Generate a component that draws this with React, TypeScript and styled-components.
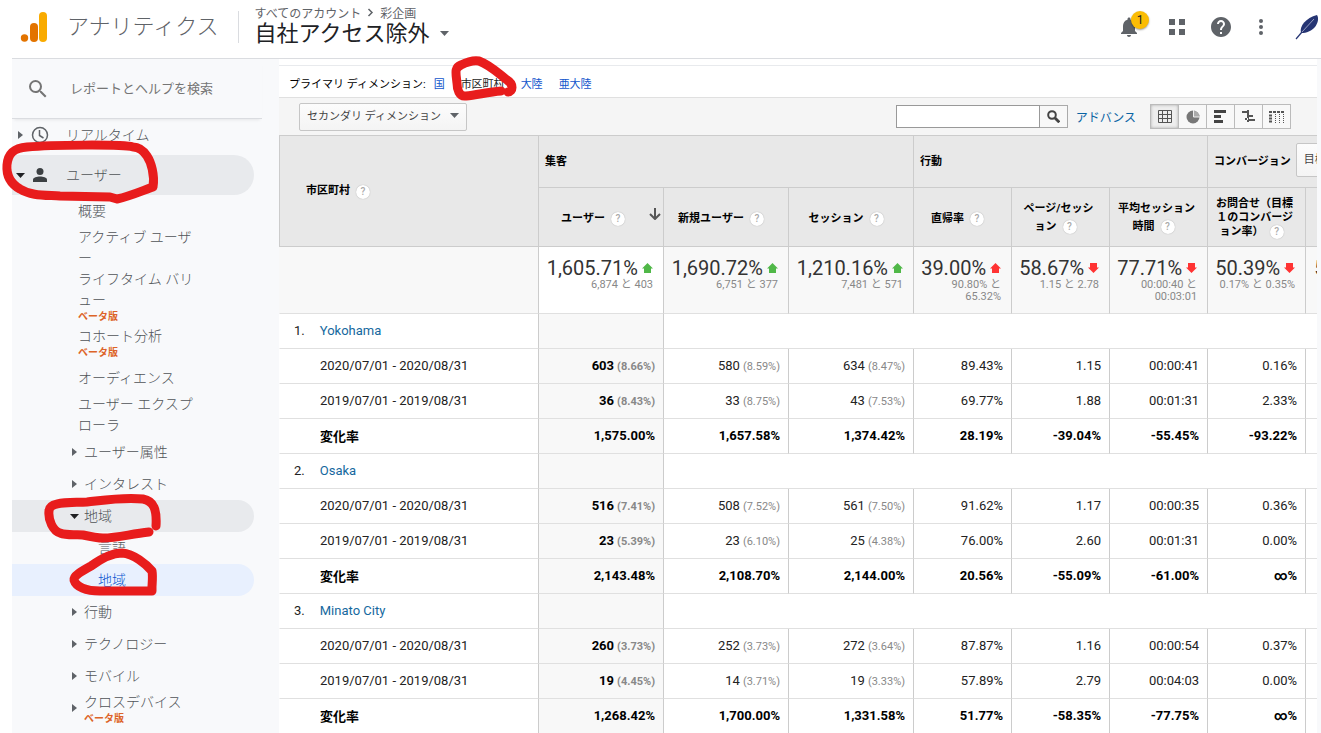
import React from "react";
import styled, { createGlobalStyle, css } from "styled-components";

const jp = `Roboto, "Noto Sans CJK JP", sans-serif`;

const GlobalStyle = createGlobalStyle`
  * { box-sizing: border-box; }
  body { margin: 0; background: #fff; font-family: ${jp}; color: #000; }
  button, input { font-family: inherit; }
  a { text-decoration: none; }
`;

const Page = styled.div`
  position: relative;
  display: flex;
  flex-direction: column;
  height: 100vh;
  overflow: hidden;
`;

/* ---------- Header ---------- */

const Header = styled.header`
  display: flex;
  align-items: center;
  flex: none;
  height: 59px;
  margin-left: 12px;
  padding: 0 0 5px 8px;
  border-bottom: 1px solid #dadce0;
`;

const Brand = styled.a`
  display: flex;
  align-items: center;
  gap: 19px;
  color: #5f6368;
  font-size: 22px;
  font-weight: 300;
  line-height: 28px;
  white-space: nowrap;
`;

const HeaderRule = styled.div`
  width: 1px;
  height: 32px;
  margin: 0 16px 0 19px;
  background: #dadce0;
`;

const Account = styled.div`
  display: flex;
  flex-direction: column;
  flex: 1;
  padding-bottom: 4px;
`;

const Crumbs = styled.nav`
  display: flex;
  align-items: center;
  gap: 6px;
  height: 18px;
  color: #5f6368;
  font-size: 12px;
  a { color: inherit; }
`;

const AccountButton = styled.button`
  display: flex;
  align-items: center;
  gap: 10px;
  height: 24px;
  padding: 0;
  border: 0;
  background: none;
  color: #202124;
  font-size: 22px;
  line-height: 24px;
`;

const Tools = styled.div`
  display: flex;
  align-items: center;
`;

const ToolButton = styled.button<{ $w: number }>`
  position: relative;
  display: flex;
  align-items: center;
  justify-content: center;
  width: ${(p) => p.$w}px;
  height: 40px;
  padding: 0;
  border: 0;
  background: none;
  color: #5f6368;
`;

const Badge = styled.span`
  position: absolute;
  top: 4px;
  right: 2px;
  width: 18px;
  height: 18px;
  border-radius: 50%;
  background: #fbbc04;
  box-shadow: 0 1px 2px rgba(0, 0, 0, 0.4);
  color: #202124;
  font-size: 12px;
  line-height: 18px;
`;

/* ---------- Sidebar ---------- */

const Main = styled.div`
  display: flex;
  flex: 1;
  min-height: 0;
  margin-left: 12px;
`;

const Sidebar = styled.aside`
  flex: none;
  width: 267px;
  overflow: hidden;
  background: #f8f9fb;
`;

const SearchBox = styled.label`
  display: flex;
  align-items: center;
  gap: 23px;
  width: 250px;
  height: 60px;
  padding-left: 17px;
  border-bottom: 1px solid #dadce0;
  box-shadow: 0 3px 3px -2px rgba(0, 0, 0, 0.08);
`;

const SearchInput = styled.input`
  flex: 1;
  min-width: 0;
  padding: 0;
  border: 0;
  outline: 0;
  background: none;
  font-size: 13px;
  &::placeholder { color: #757575; opacity: 1; }
`;

const Nav = styled.nav`
  display: flex;
  flex-direction: column;
`;

type Tone = "grey" | "blue";

const tones = { grey: "#e8eaed", blue: "#e8f0fe" };

const NavItem = styled.a<{ $h: number; $indent: number; $tone?: Tone }>`
  display: flex;
  align-items: center;
  width: 242px;
  height: ${(p) => p.$h}px;
  padding-left: ${(p) => p.$indent}px;
  border-radius: 0 20px 20px 0;
  background: ${(p) => (p.$tone ? tones[p.$tone] : "transparent")};
  color: ${(p) => (p.$tone === "blue" ? "#0b57d0" : "#505458")};
  font-size: 14px;
  font-weight: 300;
  line-height: 21px;
`;

const SectionItem = styled(NavItem)`
  & + & { margin-top: 4px; }
`;

const NavText = styled.span`
  display: block;
  max-width: 120px;
`;

const Beta = styled.span`
  display: block;
  color: #dd6428;
  font-size: 10px;
  font-weight: 700;
  line-height: 11px;
`;

const Marker = styled.span<{ $closed?: boolean }>`
  display: flex;
  align-items: center;
  width: 14px;
  padding-left: ${(p) => (p.$closed ? 2 : 0)}px;
`;

const SectionIcon = styled.span`
  display: flex;
  justify-content: center;
  width: 20px;
  margin-right: 16px;
`;

/* ---------- Report ---------- */

const Report = styled.main`
  flex: 1;
  min-width: 0;
  margin-right: 4px;
  overflow: hidden;
  box-shadow: 4px 0 0 #f8f9fb;
`;

const Dimensions = styled.div`
  display: flex;
  align-items: center;
  height: 33px;
  margin-top: 6px;
  padding: 2px 0 0 10px;
  border-top: 1px solid #e8eaed;
  border-bottom: 1px solid #e0e0e0;
  font-size: 11px;
  white-space: nowrap;
`;

const DimLink = styled.a<{ $current?: boolean }>`
  margin-left: 8px;
  color: ${(p) => (p.$current ? "#222" : "#15c")};
  & + & { margin-left: 16px; }
`;

const Toolbar = styled.div`
  display: flex;
  align-items: center;
  justify-content: space-between;
  height: 37px;
  padding: 0 27px 0 20px;
  background: #f5f5f5;
`;

const GreyButton = styled.button<{ $tall?: boolean }>`
  display: flex;
  align-items: center;
  gap: 9px;
  height: ${(p) => (p.$tall ? 34 : 28)}px;
  padding: 0 7px 3px;
  border: 1px solid #c6c6c6;
  border-radius: 2px;
  background: linear-gradient(#fcfcfc, #f4f4f4);
  color: #444;
  font-size: 11px;
  white-space: nowrap;
`;

const ToolbarRight = styled.div`
  display: flex;
  align-items: center;
`;

const FilterInput = styled.input`
  width: 144px;
  height: 23px;
  border: 1px solid #999;
  border-radius: 0;
  background: #fff;
`;

const FilterButton = styled.button`
  display: flex;
  align-items: center;
  justify-content: center;
  width: 28px;
  height: 23px;
  padding: 0;
  border: 1px solid #aaa;
  border-left: 0;
  background: #f8f8f8;
`;

const Advanced = styled.a`
  margin: 0 14px 0 8px;
  color: #0a64a4;
  font-size: 12px;
`;

const ViewButton = styled.button<{ $on?: boolean }>`
  display: flex;
  align-items: center;
  justify-content: center;
  width: 29px;
  height: 25px;
  margin-right: -1px;
  padding: 0;
  border: 1px solid #bbb;
  background: ${(p) => (p.$on ? "#eee" : "#f8f8f8")};
  box-shadow: ${(p) => (p.$on ? "inset 0 0 3px #aaa" : "none")};
`;

const Table = styled.table`
  width: 1125px;
  border-collapse: separate;
  border-spacing: 0;
  table-layout: fixed;
  font-size: 13px;
`;

const headCell = css`
  border-left: 1px solid #ccc;
  border-bottom: 1px solid #ccc;
  background: #e8e8e8;
  font-size: 11px;
  font-weight: 700;
`;

const GroupHead = styled.th`
  ${headCell}
  height: 53px;
  padding: 0 6px 4px;
  border-top: 1px solid #ccc;
  text-align: left;
  white-space: nowrap;
`;

const GroupInner = styled.div`
  display: flex;
  align-items: center;
  gap: 5px;
`;

const DimHead = styled.th`
  ${headCell}
  padding: 0 26px 2px;
  border-top: 1px solid #ccc;
  text-align: left;
`;

const ColHead = styled.th`
  ${headCell}
  height: 59px;
  padding: 2px 10px 0 6px;
  white-space: nowrap;
`;

const HeadInner = styled.div<{ $count: number; $sorted?: boolean }>`
  position: relative;
  padding-top: ${(p) => (p.$count === 1 ? 2 : 0)}px;
  padding-right: ${(p) => (p.$sorted ? 6 : 0)}px;
  line-height: ${(p) => (p.$count > 2 ? 14 : 18)}px;
`;

const SortArrow = styled.span`
  position: absolute;
  right: -8px;
  top: 0;
`;

const HelpDot = styled.span`
  display: inline-block;
  width: 14px;
  height: 14px;
  margin: 0 6px;
  border-radius: 50%;
  background: #fff;
  box-shadow: 0 0 1px #999;
  color: #aaa;
  font-size: 10px;
  font-weight: 500;
  line-height: 14px;
  text-align: center;
  vertical-align: middle;
`;

const SumCell = styled.td<{ $sorted?: boolean; $edge?: boolean }>`
  height: 67px;
  padding: 10px 10px 0 0;
  border-left: 1px solid ${(p) => (p.$edge ? "#ccc" : "transparent")};
  border-bottom: 1px solid #e0e0e0;
  background: ${(p) => (p.$sorted ? "#fff" : "#f8f8f8")};
  color: #888;
  font-size: 11px;
  line-height: 12px;
  text-align: right;
  vertical-align: top;
`;

const SumValue = styled.div`
  display: flex;
  align-items: center;
  justify-content: flex-end;
  gap: 4px;
  height: 22px;
  color: #333;
  font-size: 20px;
  white-space: nowrap;
`;

const Cell = styled.td<{ $sorted?: boolean; $edge?: boolean; $bold?: boolean }>`
  height: 35px;
  padding: 0 8px 2px 0;
  border-left: 1px solid ${(p) => (p.$edge ? "#ccc" : "transparent")};
  border-bottom: 1px solid #e0e0e0;
  background: ${(p) => (p.$sorted ? "#f8f8f8" : "#fff")};
  color: ${(p) => (p.$bold ? "#000" : "#222")};
  font-weight: ${(p) => (p.$bold ? 700 : 400)};
  text-align: right;
  white-space: nowrap;
`;

const LabelCell = styled(Cell)`
  padding-left: 40px;
  text-align: left;
`;

const PlaceCell = styled(Cell)`
  padding-left: 14px;
  text-align: left;
  a { margin-left: 15px; color: #15689e; }
`;

const Share = styled.small`
  margin-left: 3px;
  color: #888;
  font-size: 11px;
`;

/* ---------- Hand-drawn marks over the page ---------- */

const Ink = styled.svg`
  position: absolute;
  top: 0;
  left: 0;
  width: 620px;
  height: 620px;
  pointer-events: none;
`;

const Caret = ({ right, dark }: { right?: boolean; dark?: boolean }) =>
  right ? (
    <svg width="5" height="8"><path d="M0 0l5 4-5 4z" fill="#5f6368" /></svg>
  ) : (
    <svg width="9" height="5"><path d="M0 0h9L4.500 5z" fill={dark ? "#202124" : "#5f6368"} /></svg>
  );

const Trend = ({ up, color }: { up: boolean; color: string }) => (
  <svg width="11" height="10" viewBox="0 0 11 10">
    <path d={up ? "M5.500 0L11 5.500H9V10H2V5.500H0z" : "M5.500 10L0 4.500h2V0h7v4.500h2z"} fill={color} />
  </svg>
);

const Lens = () => (
  <svg width="18" height="18" viewBox="3 3 18 18" fill="#757575">
    <path d="M15.500 14h-.79l-.28-.27A6.470 6.470 0 0 0 16 9.500 6.500 6.500 0 1 0 9.500 16c1.610 0 3.090-.59 4.230-1.570l.27.28v.79l5 4.990L20.490 19l-4.990-5zm-6 0C7.010 14 5 11.990 5 9.500S7.010 5 9.500 5 14 7.010 14 9.500 11.990 14 9.500 14z" />
  </svg>
);

const green = "#50b848";
const red = "#ff3333";

const summary = [
  { value: "1,605.71%", note: "6,874 と 403", up: true, color: green },
  { value: "1,690.72%", note: "6,751 と 377", up: true, color: green },
  { value: "1,210.16%", note: "7,481 と 571", up: true, color: green },
  { value: "39.00%", note: "90.80% と 65.32%", up: true, color: red },
  { value: "58.67%", note: "1.15 と 2.78", up: false, color: red },
  { value: "77.71%", note: "00:00:40 と 00:03:01", up: false, color: red },
  { value: "50.39%", note: "0.17% と 0.35%", up: false, color: red },
];

const periodA = "2020/07/01 - 2020/08/31";
const periodB = "2019/07/01 - 2019/08/31";

const places = [
  {
    name: "Yokohama",
    rows: [
      [periodA, "603|(8.66%)", "580|(8.59%)", "634|(8.47%)", "89.43%", "1.15", "00:00:41", "0.16%"],
      [periodB, "36|(8.43%)", "33|(8.75%)", "43|(7.53%)", "69.77%", "1.88", "00:01:31", "2.33%"],
      ["変化率", "1,575.00%", "1,657.58%", "1,374.42%", "28.19%", "-39.04%", "-55.45%", "-93.22%"],
    ],
  },
  {
    name: "Osaka",
    rows: [
      [periodA, "516|(7.41%)", "508|(7.52%)", "561|(7.50%)", "91.62%", "1.17", "00:00:35", "0.36%"],
      [periodB, "23|(5.39%)", "23|(6.10%)", "25|(4.38%)", "76.00%", "2.60", "00:01:31", "0.00%"],
      ["変化率", "2,143.48%", "2,108.70%", "2,144.00%", "20.56%", "-55.09%", "-61.00%", "∞%"],
    ],
  },
  {
    name: "Minato City",
    rows: [
      [periodA, "260|(3.73%)", "252|(3.73%)", "272|(3.64%)", "87.87%", "1.16", "00:00:54", "0.37%"],
      [periodB, "19|(4.45%)", "14|(3.71%)", "19|(3.33%)", "57.89%", "2.79", "00:04:03", "0.00%"],
      ["変化率", "1,268.42%", "1,700.00%", "1,331.58%", "51.77%", "-58.35%", "-77.75%", "∞%"],
    ],
  },
];

const columns: { lines: string[]; sorted?: boolean }[] = [
  { lines: ["ユーザー"], sorted: true },
  { lines: ["新規ユーザー"] },
  { lines: ["セッション"] },
  { lines: ["直帰率"] },
  { lines: ["ページ/セッシ", "ョン"] },
  { lines: ["平均セッション", "時間"] },
  { lines: ["お問合せ（目標", "１のコンバージ", "ョン率）"] },
];

type SubItem = { text: string; h: number; beta?: boolean; arrow?: boolean };

const audienceItems: SubItem[] = [
  { text: "概要", h: 32 },
  { text: "アクティブ ユーザー", h: 42 },
  { text: "ライフタイム バリュー", h: 53, beta: true },
  { text: "コホート分析", h: 40, beta: true },
  { text: "オーディエンス", h: 32 },
  { text: "ユーザー エクスプローラ", h: 42 },
  { text: "ユーザー属性", h: 32, arrow: true },
  { text: "インタレスト", h: 32, arrow: true },
];

const moreItems: SubItem[] = [
  { text: "行動", h: 32, arrow: true },
  { text: "テクノロジー", h: 32, arrow: true },
  { text: "モバイル", h: 32, arrow: true },
  { text: "クロスデバイス", h: 32, beta: true, arrow: true },
];

const SubItems = ({ items }: { items: SubItem[] }) => (
  <>
    {items.map((it) => (
      <NavItem href="#" key={it.text} $h={it.h} $indent={it.arrow ? 58 : 66}>
        {it.arrow && <Marker $closed><Caret right /></Marker>}
        <NavText>{it.text}{it.beta && <Beta>ベータ版</Beta>}</NavText>
      </NavItem>
    ))}
  </>
);

export default function App() {
  return (
    <Page>
      <GlobalStyle />
      <Header>
        <Brand href="#">
          <svg width="28" height="32" viewBox="0 0 28 32">
            <rect x="19" y="1" width="8" height="30" rx="4" fill="#f9ab00" />
            <rect x="10" y="12" width="8" height="19" rx="4" fill="#e37400" />
            <circle cx="4.500" cy="27" r="3.700" fill="#e37400" />
          </svg>
          アナリティクス
        </Brand>
        <HeaderRule />
        <Account>
          <Crumbs>
            <a href="#">すべてのアカウント</a>
            <svg width="7" height="9" fill="none" stroke="#5f6368" strokeWidth="1.500"><path d="M1.500 1l3.500 3.500L1.500 8" /></svg>
            <a href="#">彩企画</a>
          </Crumbs>
          <AccountButton>自社アクセス除外 <Caret /></AccountButton>
        </Account>
        <Tools>
          <ToolButton $w={44} aria-label="通知">
            <svg width="24" height="24" viewBox="0 0 24 24" fill="currentColor"><path d="M12 22c1.100 0 2-.9 2-2h-4c0 1.100.9 2 2 2zm6-6v-5c0-3.070-1.630-5.640-4.500-6.320V4c0-.83-.67-1.500-1.500-1.500s-1.500.67-1.500 1.500v.68C7.640 5.360 6 7.920 6 11v5l-2 2v1h16v-1l-2-2z" /></svg>
            <Badge>1</Badge>
          </ToolButton>
          <ToolButton $w={52} aria-label="アプリ">
            <svg width="16" height="16" fill="currentColor"><path d="M0 0h6v6H0zM10 0h6v6h-6zM0 10h6v6H0zM10 10h6v6h-6z" /></svg>
          </ToolButton>
          <ToolButton $w={36} aria-label="ヘルプ">
            <svg width="24" height="24" viewBox="0 0 24 24" fill="currentColor"><path d="M12 2C6.480 2 2 6.480 2 12s4.480 10 10 10 10-4.480 10-10S17.520 2 12 2zm1 17h-2v-2h2v2zm2.070-7.750l-.9.920C13.450 12.900 13 13.500 13 15h-2v-.5c0-1.100.45-2.100 1.170-2.830l1.240-1.260c.37-.36.590-.86.590-1.410 0-1.100-.9-2-2-2s-2 .9-2 2H8c0-2.210 1.790-4 4-4s4 1.790 4 4c0 .88-.36 1.680-.93 2.250z" /></svg>
          </ToolButton>
          <ToolButton $w={44} aria-label="その他">
            <svg width="4" height="16" fill="currentColor"><circle cx="2" cy="2" r="2" /><circle cx="2" cy="8" r="2" /><circle cx="2" cy="14" r="2" /></svg>
          </ToolButton>
          <ToolButton $w={38} aria-label="アカウント">
            <svg width="34" height="26" viewBox="-11 -1 34 26">
              <path d="M5 18C3 11 10 3 21 0c2 3 1 8-2 12-4 4-8 6-14 6z" fill="#263573" />
              <path d="M6 17L18 4" stroke="#c8cde4" strokeWidth=".7" fill="none" />
              <path d="M0 24L6 17" stroke="#263573" strokeWidth="1.200" />
            </svg>
          </ToolButton>
        </Tools>
      </Header>

      <Main>
        <Sidebar>
          <SearchBox>
            <Lens />
            <SearchInput aria-label="検索" placeholder="レポートとヘルプを検索" />
          </SearchBox>
          <Nav>
            <SectionItem href="#" $h={32} $indent={4}>
              <Marker $closed><Caret right /></Marker>
              <SectionIcon>
                <svg width="18" height="18" fill="none" stroke="#5f6368" strokeWidth="1.500"><circle cx="9" cy="9" r="7.500" /><path d="M8.500 4v5.500l4 2.500" /></svg>
              </SectionIcon>
              リアルタイム
            </SectionItem>
            <SectionItem href="#" $h={40} $indent={4} $tone="grey">
              <Marker><Caret dark /></Marker>
              <SectionIcon>
                <svg width="14" height="14" fill="#3c4043"><circle cx="7" cy="3.500" r="3.500" /><path d="M0 14v-2.500C0 9.500 4 8.500 7 8.500s7 1 7 3V14z" /></svg>
              </SectionIcon>
              ユーザー
            </SectionItem>
            <SubItems items={audienceItems} />
            <NavItem href="#" $h={32} $indent={58} $tone="grey"><Marker><Caret dark /></Marker>地域</NavItem>
            <NavItem href="#" $h={32} $indent={86}>言語</NavItem>
            <NavItem href="#" $h={32} $indent={86} $tone="blue">地域</NavItem>
            <SubItems items={moreItems} />
          </Nav>
        </Sidebar>

        <Report>
          <Dimensions>
            プライマリ ディメンション:
            <DimLink href="#">国</DimLink>
            <DimLink href="#" $current>市区町村</DimLink>
            <DimLink href="#">大陸</DimLink>
            <DimLink href="#">亜大陸</DimLink>
          </Dimensions>
          <Toolbar>
            <GreyButton>セカンダリ ディメンション <Caret /></GreyButton>
            <ToolbarRight>
              <FilterInput aria-label="フィルタ" />
              <FilterButton aria-label="検索">
                <svg width="13" height="13" fill="none" stroke="#444" strokeWidth="2"><circle cx="5" cy="5" r="3.800" /><path d="M8 8l4.300 4.300" strokeWidth="2.800" /></svg>
              </FilterButton>
              <Advanced href="#">アドバンス</Advanced>
              <ViewButton $on aria-label="表">
                <svg width="14" height="13" fill="none" stroke="#555"><path d="M.5.5h13v12H.5zM.5 4.500h13M.5 8.500h13M4.500.5v12M9.500.5v12" /></svg>
              </ViewButton>
              <ViewButton aria-label="割合">
                <svg width="14" height="14"><circle cx="7" cy="7" r="6.500" fill="#777" /><path d="M7 7V.5A6.500 6.500 0 0 1 13.500 7z" fill="#aaa" /><path d="M7.500 0v7H14" fill="none" stroke="#eee" /></svg>
              </ViewButton>
              <ViewButton aria-label="サマリー">
                <svg width="13" height="13" fill="#444"><path d="M0 0h12v3H0zM0 5h7v3H0zM0 10h9v3H0z" /></svg>
              </ViewButton>
              <ViewButton aria-label="比較">
                <svg width="13" height="13" fill="#555"><path d="M0 1h6v2H0zM6 5h5v2H6zM3 10h3v-2H3zM6 9h7v2H6zM5 0h2v12H5z" /></svg>
              </ViewButton>
              <ViewButton aria-label="ピボット">
                <svg width="15" height="12" fill="none" stroke="#555">
                  <path d="M0 1h3M4 1h3M8 1h3M12 1h3" strokeWidth="2" />
                  <path d="M0 4.500h3M0 7.500h3M0 10.500h3" strokeWidth="2" />
                  <path d="M6.500 3v9M10.500 3v9M14.500 3v9" strokeDasharray="1 1" />
                </svg>
              </ViewButton>
            </ToolbarRight>
          </Toolbar>
          <Table>
            <colgroup>
              <col width="259" /><col width="125" /><col width="125" /><col width="125" />
              <col width="98" /><col width="98" /><col width="98" /><col width="98" /><col width="99" />
            </colgroup>
            <thead>
              <tr>
                <DimHead rowSpan={2}>市区町村<HelpDot>?</HelpDot></DimHead>
                <GroupHead colSpan={3}>集客</GroupHead>
                <GroupHead colSpan={3}>行動</GroupHead>
                <GroupHead colSpan={2}><GroupInner>コンバージョン<GreyButton $tall>目標</GreyButton></GroupInner></GroupHead>
              </tr>
              <tr>
                {columns.map((c) => (
                  <ColHead key={c.lines[0]}>
                    <HeadInner $count={c.lines.length} $sorted={c.sorted}>
                      {c.lines.map((l, i) => (
                        <div key={l}>{l}{i === c.lines.length - 1 && <HelpDot>?</HelpDot>}</div>
                      ))}
                      {c.sorted && (
                        <SortArrow><svg width="12" height="12" fill="none" stroke="#555" strokeWidth="2"><path d="M6 0v11M1 6l5 5 5-5" /></svg></SortArrow>
                      )}
                    </HeadInner>
                  </ColHead>
                ))}
                <ColHead />
              </tr>
            </thead>
            <tbody>
              <tr>
                <SumCell />
                {summary.map((s, i) => (
                  <SumCell key={s.value} $edge $sorted={i === 0}>
                    <SumValue>{s.value}<Trend up={s.up} color={s.color} /></SumValue>
                    {s.note}
                  </SumCell>
                ))}
                <SumCell $edge><SumValue>50.39%<Trend up={false} color={red} /></SumValue></SumCell>
              </tr>
              {places.map((p, n) => (
                <React.Fragment key={p.name}>
                  <tr>
                    <PlaceCell>{n + 1}.<a href="#">{p.name}</a></PlaceCell>
                    <Cell $sorted $edge />
                    <Cell $edge colSpan={7} />
                  </tr>
                  {p.rows.map((r, ri) => (
                    <tr key={ri}>
                      <LabelCell $bold={ri === 2}>{r[0]}</LabelCell>
                      {r.slice(1).map((v, ci) => {
                        const [main, share] = v.split("|");
                        return (
                          <Cell key={ci} $edge $sorted={ci === 0} $bold={ri === 2 || ci === 0}>
                            {main}{share && <Share>{share}</Share>}
                          </Cell>
                        );
                      })}
                      <Cell $edge />
                    </tr>
                  ))}
                </React.Fragment>
              ))}
            </tbody>
          </Table>
        </Report>
      </Main>

      <Ink viewBox="0 0 620 620" fill="none" stroke="#e81c1c" strokeWidth="9" strokeLinecap="round" strokeLinejoin="round" aria-hidden="true">
        <path d="M117 199C131 196 144 190 153 187C155 175 151 162 147 156C143 150 139 147 133 147C122 144 50 145 27 147C14 148 8 153 7 165C6 178 13 185 20 189C31 196 45 195 60 196L110 197z" />
        <path d="M156 526C157 510 154 501 143 499C123 497 105 500 87 502C70 503 49 501 49 511C48 520 53 531 60 533C68 536 77 534 83 535C92 537 98 538 103 538C118 538 130 534 149 532" />
        <path d="M152 591H100C86 591 76 587 74 580C73 576 82 571 91 566C102 558 112 553 122 553C134 554 146 564 152 571C153 577 152 584 152 587z" />
        <path d="M501 91C488 92 477 95 466 96C459 97 457 89 457 83C456 73 454 68 461 65C467 62 473 60 479 61C490 65 498 73 507 80C514 84 513 92 508 92" />
      </Ink>
    </Page>
  );
}
